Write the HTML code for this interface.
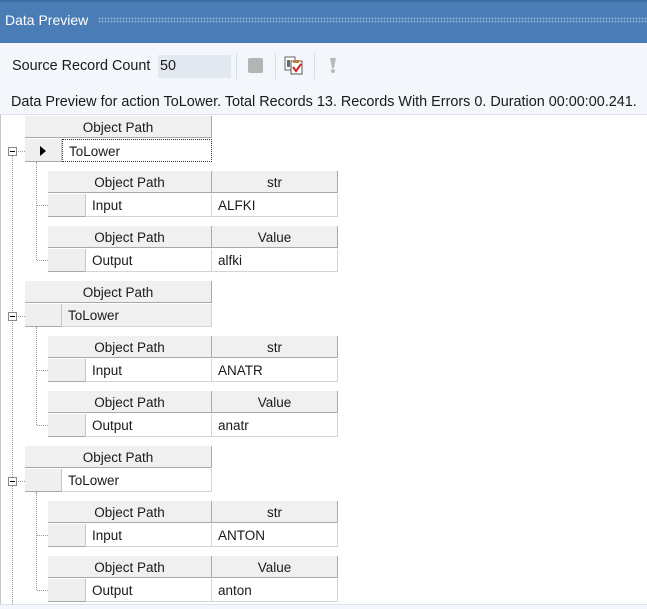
<!DOCTYPE html>
<html><head><meta charset="utf-8"><style>
*{margin:0;padding:0;box-sizing:border-box}
body{width:647px;height:609px;overflow:hidden;background:#f3f6fa;font-family:"Liberation Sans",sans-serif;font-size:13.5px;color:#1a1a1a;position:relative}
.a{position:absolute}
.hd{position:absolute;background:#f0f0f0;border-right:1px solid #a8a8a8;border-bottom:1px solid #a8a8a8;text-align:center;line-height:23px;height:22px}
.rh{position:absolute;background:#efefef;border-right:1px solid #c8c8c8;border-bottom:1px solid #a8a8a8;height:23px}
.c{position:absolute;background:#fff;border-right:1px solid #d4d4d4;border-bottom:1px solid #d4d4d4;height:23px;line-height:23px;padding-left:6px}
.vl{position:absolute;border-left:1px dotted #999;width:0}
.hl{position:absolute;border-top:1px dotted #999;height:0}
.mb{position:absolute;width:9px;height:9px;border:1px solid #888;background:#fff}
.mb:after{content:"";position:absolute;left:1px;top:3px;width:5px;height:1px;background:#000}
</style></head><body>
<div class="a" style="left:0;top:0;width:647px;height:43px;background:#4a7db5;border-top:2px solid #3d6da3"></div>
<div class="a" style="left:5px;top:12px;color:#fff;font-size:14px">Data Preview</div>
<div class="a" style="left:98px;top:17px;width:549px;height:6px;background-image:radial-gradient(circle,#8fb0d6 0.8px,transparent 1px);background-size:3px 3px"></div>
<div class="a" style="left:12px;top:58px;font-size:14.4px">Source Record Count</div>
<div class="a" style="left:158px;top:55px;width:73px;height:23px;background:#e3e9f0;line-height:23px;padding-left:2px;font-size:14.4px">50</div>
<div class="a" style="left:236px;top:53px;width:1px;height:26px;background:#d8dde3"></div>
<div class="a" style="left:248px;top:58px;width:15px;height:15px;background:#b4b4b4;border-radius:2px"></div>
<div class="a" style="left:275px;top:53px;width:1px;height:26px;background:#d8dde3"></div>
<svg class="a" style="left:284px;top:55px" width="22" height="22" viewBox="0 0 22 22"><rect x="1" y="2" width="10" height="13" fill="#fff" stroke="#666"/><rect x="3" y="5" width="3" height="7" fill="#6a6a6a"/><rect x="7" y="6" width="11" height="13" fill="#fff" stroke="#555"/><rect x="9" y="5" width="6" height="3" fill="#c08040"/><path d="M9 12l3 4 5-7" stroke="#d62020" stroke-width="2" fill="none"/></svg>
<div class="a" style="left:314px;top:53px;width:1px;height:26px;background:#d8dde3"></div>
<svg class="a" style="left:328px;top:57px" width="10" height="18"><path d="M2 1h6l-2 10h-2z" fill="#b8b8b8"/><circle cx="5" cy="14" r="2" fill="#b8b8b8"/></svg>
<div class="a" style="left:11px;top:94px;font-size:14.4px;white-space:nowrap">Data Preview for action ToLower. Total Records 13. Records With Errors 0. Duration 00:00:00.241.</div>
<div class="a" style="left:0;top:114px;width:647px;height:491px;background:#fff;border-left:1px solid #c8c8c8;border-top:1px solid #dde2e8;border-bottom:1px solid #dde2e8"></div>
<div class="vl" style="left:12px;top:156px;height:449px"></div>

<!-- block 1 -->
<div class="hd" style="left:25px;top:116px;width:187px">Object Path</div>
<div class="rh" style="left:25px;top:139px;width:37px"></div>
<div class="a" style="left:40px;top:146px;width:0;height:0;border-left:6px solid #000;border-top:5px solid transparent;border-bottom:5px solid transparent"></div>
<div class="c" style="left:62px;top:139px;width:150px;border:1px dotted #333">ToLower</div>
<div class="mb" style="left:8px;top:147px"></div><div class="hl" style="left:18px;top:151px;width:7px"></div>
<div class="vl" style="left:36px;top:162px;height:98px"></div>
<div class="hd" style="left:48px;top:171px;width:164px">Object Path</div><div class="hd" style="left:212px;top:171px;width:126px">str</div>
<div class="rh" style="left:48px;top:194px;width:38px"></div><div class="c" style="left:86px;top:194px;width:126px">Input</div><div class="c" style="left:212px;top:194px;width:126px">ALFKI</div>
<div class="hl" style="left:37px;top:205px;width:11px"></div>
<div class="hd" style="left:48px;top:226px;width:164px">Object Path</div><div class="hd" style="left:212px;top:226px;width:126px">Value</div>
<div class="rh" style="left:48px;top:249px;width:38px"></div><div class="c" style="left:86px;top:249px;width:126px">Output</div><div class="c" style="left:212px;top:249px;width:126px">alfki</div>
<div class="hl" style="left:37px;top:260px;width:11px"></div>

<!-- block 2 -->
<div class="hd" style="left:25px;top:281px;width:187px">Object Path</div>
<div class="rh" style="left:25px;top:304px;width:37px"></div>
<div class="c" style="left:62px;top:304px;width:150px;background:#f0f0f0">ToLower</div>
<div class="mb" style="left:8px;top:312px"></div><div class="hl" style="left:18px;top:316px;width:7px"></div>
<div class="vl" style="left:36px;top:327px;height:98px"></div>
<div class="hd" style="left:48px;top:336px;width:164px">Object Path</div><div class="hd" style="left:212px;top:336px;width:126px">str</div>
<div class="rh" style="left:48px;top:359px;width:38px"></div><div class="c" style="left:86px;top:359px;width:126px">Input</div><div class="c" style="left:212px;top:359px;width:126px">ANATR</div>
<div class="hl" style="left:37px;top:370px;width:11px"></div>
<div class="hd" style="left:48px;top:391px;width:164px">Object Path</div><div class="hd" style="left:212px;top:391px;width:126px">Value</div>
<div class="rh" style="left:48px;top:414px;width:38px"></div><div class="c" style="left:86px;top:414px;width:126px">Output</div><div class="c" style="left:212px;top:414px;width:126px">anatr</div>
<div class="hl" style="left:37px;top:425px;width:11px"></div>

<!-- block 3 -->
<div class="hd" style="left:25px;top:446px;width:187px">Object Path</div>
<div class="rh" style="left:25px;top:469px;width:37px"></div>
<div class="c" style="left:62px;top:469px;width:150px">ToLower</div>
<div class="mb" style="left:8px;top:477px"></div><div class="hl" style="left:18px;top:481px;width:7px"></div>
<div class="vl" style="left:36px;top:492px;height:98px"></div>
<div class="hd" style="left:48px;top:501px;width:164px">Object Path</div><div class="hd" style="left:212px;top:501px;width:126px">str</div>
<div class="rh" style="left:48px;top:524px;width:38px"></div><div class="c" style="left:86px;top:524px;width:126px">Input</div><div class="c" style="left:212px;top:524px;width:126px">ANTON</div>
<div class="hl" style="left:37px;top:535px;width:11px"></div>
<div class="hd" style="left:48px;top:556px;width:164px">Object Path</div><div class="hd" style="left:212px;top:556px;width:126px">Value</div>
<div class="rh" style="left:48px;top:579px;width:38px"></div><div class="c" style="left:86px;top:579px;width:126px">Output</div><div class="c" style="left:212px;top:579px;width:126px">anton</div>
<div class="hl" style="left:37px;top:590px;width:11px"></div>
</body></html>
